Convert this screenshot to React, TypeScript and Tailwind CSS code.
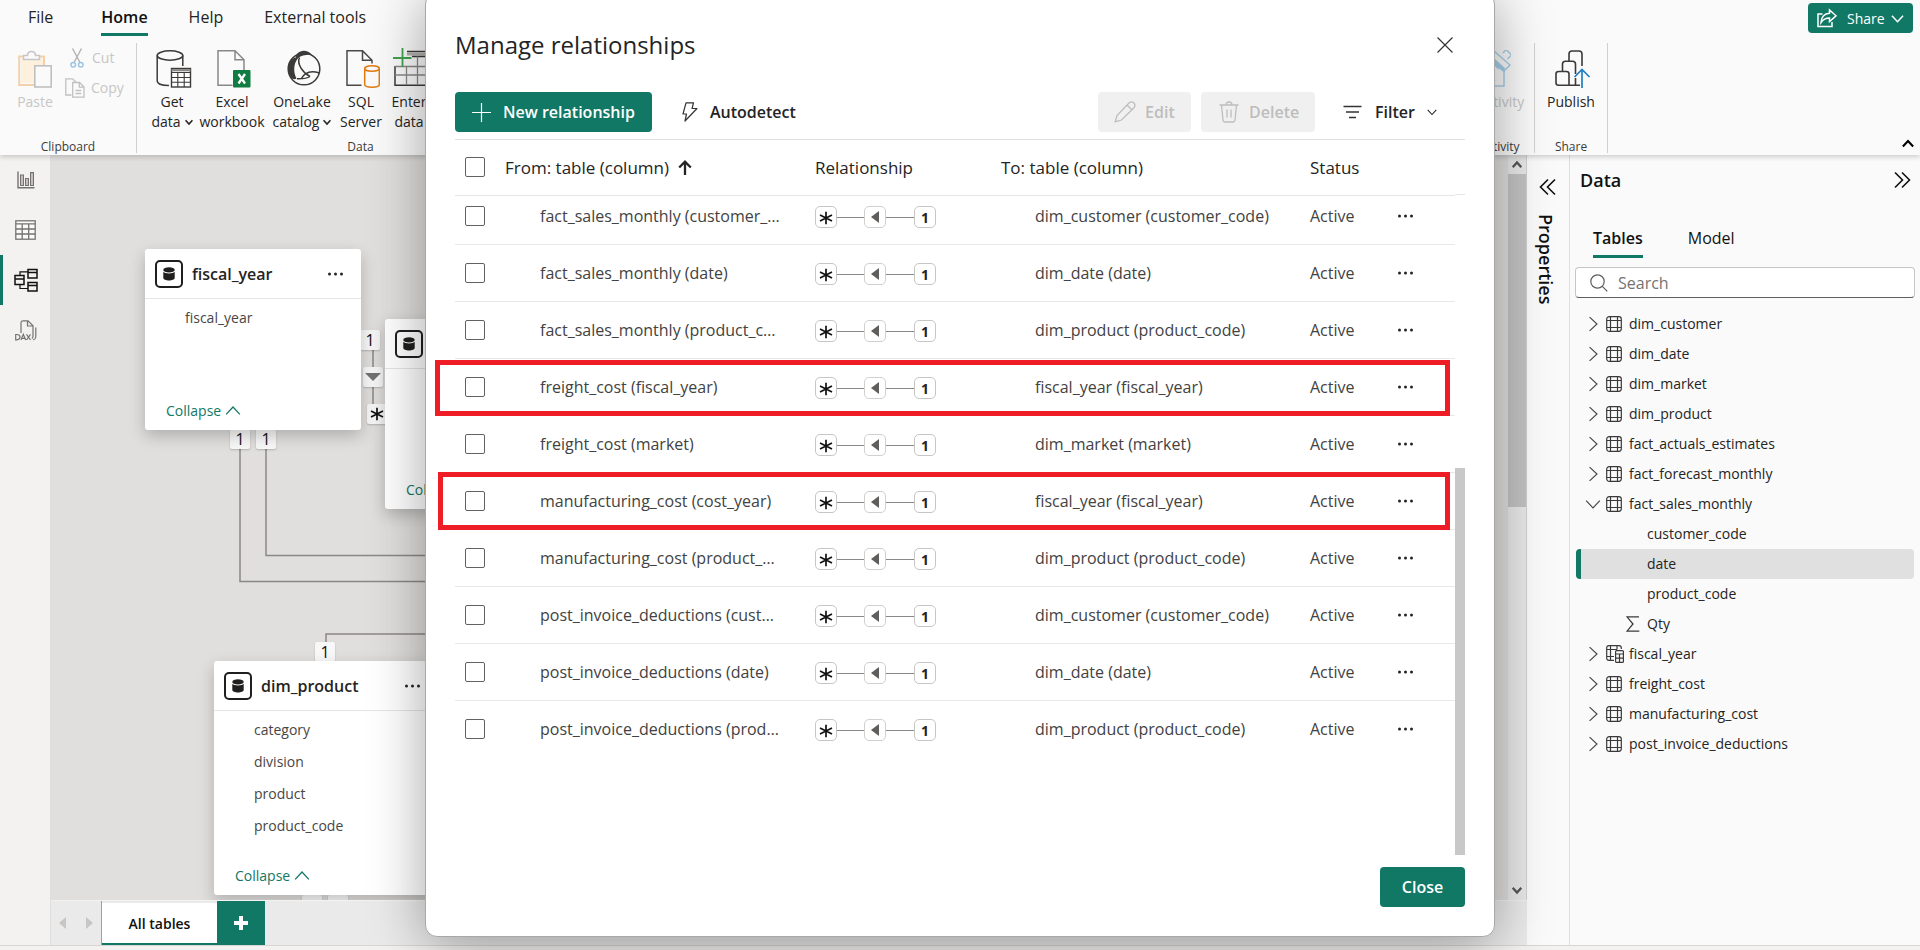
import React from "react";

type IconProps = { className?: string };

/* ---------- icons ---------- */

const Chevron = ({ dir = "right", size = 14, stroke = 1, className = "" }: { dir?: "right" | "down" | "up"; size?: number; stroke?: number; className?: string }) => {
  const d = { right: "M4 1 L10.5 7 L4 13", down: "M1 4 L7 10.5 L13 4", up: "M1 10 L7 3.5 L13 10" }[dir];
  return (
    <svg width={size} height={size} viewBox="0 0 14 14" fill="none" stroke="currentColor" strokeWidth={stroke} className={className} aria-hidden="true">
      <path d={d} />
    </svg>
  );
};

const DoubleChevron = ({ flip = false }: { flip?: boolean }) => (
  <svg width="18" height="18" viewBox="0 0 18 18" fill="none" stroke="currentColor" strokeWidth="1.6" aria-hidden="true">
    <path d={flip ? "M9 1.5 L1.5 9 L9 16.5 M16 1.5 L8.5 9 L16 16.5" : "M2 1.5 L9.5 9 L2 16.5 M9 1.5 L16.5 9 L9 16.5"} />
  </svg>
);

const Dots = () => (
  <svg width="18" height="6" viewBox="0 0 18 6" fill="currentColor" aria-hidden="true">
    <circle cx="2.5" cy="3" r="1.5" />
    <circle cx="8.5" cy="3" r="1.5" />
    <circle cx="14.5" cy="3" r="1.5" />
  </svg>
);

const PasteIcon = () => (
  <svg width="34" height="38" viewBox="0 0 34 38" fill="none" aria-hidden="true">
    <path d="M3 8 H25 V15 H16 V33 H3 Z" fill="#fdf0dc" />
    <path d="M26 15 V6.500 H1.200 V35 H16" stroke="#f4cfab" strokeWidth="2" />
    <path d="M5.500 9.500 V5.500 H9.500 C9.500 0 17.500 0 17.500 5.500 H21.500 V9.500 Z" fill="#fafafa" stroke="#c6c6c6" strokeWidth="1.500" />
    <rect x="16.800" y="15.800" width="16.400" height="21.200" fill="#fafafa" stroke="#c0c0c0" strokeWidth="1.600" />
  </svg>
);

const CutIcon = () => (
  <svg width="14" height="20" viewBox="0 0 14 20" fill="none" aria-hidden="true">
    <path d="M2.500 0.500 L10 14.500 M11.500 0.500 L4 14.500" stroke="#b5b5b5" strokeWidth="1.500" />
    <circle cx="3.200" cy="16.800" r="2.300" stroke="#9cc6e4" strokeWidth="1.500" />
    <circle cx="10.800" cy="16.800" r="2.300" stroke="#9cc6e4" strokeWidth="1.500" />
  </svg>
);

const CopyIcon = () => (
  <svg width="20" height="20" viewBox="0 0 20 20" fill="none" stroke="#c0c0c0" strokeWidth="1.300" aria-hidden="true">
    <path d="M6.500 17 H0.800 V0.800 H7.500 L11 4" />
    <path d="M7.700 4.500 H14.500 L19 9 V19.200 H7.700 Z M14.300 4.500 V9.200 H19 M10.500 12.500 H16.200 M10.500 15.500 H16.200" />
  </svg>
);

const DatabaseTableIcon = () => (
  <svg width="36" height="38" viewBox="0 0 36 38" fill="none" stroke="#3b3a39" strokeWidth="1.500" aria-hidden="true">
    <ellipse cx="14" cy="5.500" rx="12.800" ry="4.700" />
    <path d="M1.200 5.500 V31 C1.200 34 7 35.500 13 35.500 M26.800 5.500 V16" />
    <rect x="15.500" y="18.500" width="19" height="18.500" fill="#fff" strokeWidth="1.400" />
    <path d="M15.500 20.200 H34.500" strokeWidth="2.200" stroke="#8a8886" />
    <path d="M15.500 22.500 H34.500 M15.500 27.500 H34.500 M15.500 32.200 H34.500 M21.800 22.500 V37 M28.200 22.500 V37" strokeWidth="1.100" />
  </svg>
);

const ExcelIcon = () => (
  <svg width="34" height="38" viewBox="0 0 34 38" fill="none" aria-hidden="true">
    <path d="M15.500 35.300 H1 V0.800 H18 L27 9.800 V20 M18 0.800 V9.800 H27" stroke="#8a8886" strokeWidth="1.500" />
    <rect x="16" y="20" width="17.500" height="17.500" rx="1" fill="#107c41" />
    <path d="M21.500 24 L28 33.500 M28 24 L21.500 33.500" stroke="#fff" strokeWidth="2.300" />
  </svg>
);

const OneLakeIcon = () => (
  <svg width="36" height="38" viewBox="0 0 36 38" fill="none" aria-hidden="true">
    <circle cx="18" cy="19" r="15.800" stroke="#3b3a39" strokeWidth="1.500" />
    <path d="M10.500 4.500 C14.500 -0.500 21.500 -0.500 26 4.800 C20 4.500 15.500 5.200 12 8.200 C7.500 13.500 7 22 10.500 28.500 C8.500 29.800 6.500 29 5 27.500 C-0.500 20 1.500 9.500 9.800 7.500 Z" fill="#3b3a39" />
    <path d="M13.500 7.500 C10.500 14 17 23 24 26.500 M15 29 C19 21.500 26 20.500 33.500 23 M24 26.500 C21 28.500 16.500 29 11 28.800" stroke="#3b3a39" strokeWidth="1.500" />
  </svg>
);

const SqlIcon = () => (
  <svg width="34" height="38" viewBox="0 0 34 38" fill="none" aria-hidden="true">
    <path d="M15.500 35.300 H1 V0.800 H16.500 L26 10.300 V13.500 M16.500 0.800 V10.300 H26" stroke="#4a4948" strokeWidth="1.500" />
    <ellipse cx="26" cy="18.500" rx="7.300" ry="2.800" stroke="#e27a10" strokeWidth="1.500" />
    <path d="M18.700 18.500 V34.500 C18.700 38 33.300 38 33.300 34.500 V18.500" stroke="#e27a10" strokeWidth="1.500" />
  </svg>
);

const EnterDataIcon = () => (
  <svg width="36" height="38" viewBox="0 0 36 38" fill="none" className="overflow-visible" aria-hidden="true">
    <path d="M14 1.500 H36" stroke="#3b3a39" strokeWidth="1.500" />
    <path d="M14 4 H36" stroke="#b3b0ad" strokeWidth="3" />
    <path d="M19 6.500 H36 M2 16 V35.200 H36" stroke="#3b3a39" strokeWidth="1.500" />
    <path d="M2 16.500 H36 M2 25 H36 M13.500 16 V35 M24.500 6.500 V35" stroke="#8a8886" strokeWidth="1.300" />
    <path d="M9.500 -2 V17 M0 8 H18.500" stroke="#3fa34d" strokeWidth="1.800" />
  </svg>
);

const SensitivityIcon = () => (
  <svg width="34" height="38" viewBox="0 0 34 38" fill="none" stroke="#a5cfe8" strokeWidth="1.500" aria-hidden="true">
    <path d="M8 14 H2 V36 H27 V20 M8 21 L18 31" />
    <path d="M10 8 L22 19 M17 1 L33 15 L27 21 L12 8 Z M26 3 L29 -0.500 L34.500 5 L30.500 9" />
    <path d="M15 9 L27 20" strokeWidth="4" />
  </svg>
);

const PublishIcon = () => (
  <svg width="36" height="38" viewBox="0 0 36 38" fill="none" aria-hidden="true">
    <path d="M14 11 V4 Q14 1 17 1 H24 Q27 1 27 4 V16 M7.500 21 V14 Q7.500 11.200 10.500 11.200 H17.500 Q20.500 11.200 20.500 14 V24 M1 24 Q1 21.500 3.500 21.500 H11.500 Q14 21.500 14 24 V35.200 H3.500 Q1 35.200 1 33 Z M14 35.200 H25 M20.500 28 V35.200" stroke="#3b3a39" strokeWidth="1.600" />
    <path d="M27 38 V19.500 M19.500 27 L27 19.500 L34.500 27" stroke="#1f7fc4" strokeWidth="1.700" />
  </svg>
);

const ShareIcon = () => (
  <svg width="20" height="20" viewBox="0 0 20 20" fill="none" stroke="#fff" strokeWidth="1.500" aria-hidden="true">
    <path d="M5.500 6 H1 V18.500 H15 V14" />
    <path d="M4 14.500 C4.500 8.500 8 5.500 12.500 5.300 V2 L19 7.800 L12.500 13.500 V10 C9 10 6.500 11 4 14.500 Z" />
  </svg>
);

const ReportIcon = () => (
  <svg width="18" height="18" viewBox="0 0 18 18" fill="none" stroke="#757371" strokeWidth="1.200" aria-hidden="true">
    <path d="M1 0.500 V16.800 H17.500" strokeWidth="1.400" />
    <path d="M3.600 4 H6.400 V14.500 H3.600 Z M8.600 7.500 H11.400 V14.500 H8.600 Z M13.600 1.600 H16.400 V14.500 H13.600 Z" fill="#d6d4d2" />
  </svg>
);

const TableViewIcon = () => (
  <svg width="21" height="20" viewBox="0 0 21 20" fill="none" stroke="#757371" strokeWidth="1.300" aria-hidden="true">
    <rect x="0.800" y="0.800" width="19.400" height="18.400" fill="#fafafa" />
    <path d="M0.800 3.800 H20.200 M0.800 9 H20.200 M0.800 14 H20.200 M7.200 3.800 V19 M13.700 3.800 V19" />
  </svg>
);

const ModelIcon = () => (
  <svg width="24" height="24" viewBox="0 0 24 24" fill="none" stroke="#111" strokeWidth="1.500" aria-hidden="true">
    <path d="M1 7.500 H10 V16.500 H1 Z M1 11 H10 M14 1.500 H23 V10 H14 Z M14 4.500 H23 M14 14.500 H23 V23 H14 Z M14 17.500 H23" />
    <path d="M6 7.500 V3.800 H14 M6 16.500 V20.500 H14" strokeWidth="1.200" />
  </svg>
);

const DaxIcon = () => (
  <svg width="22" height="21" viewBox="0 0 22 21" fill="none" stroke="#757371" strokeWidth="1.200" aria-hidden="true">
    <path d="M6 13 V3 Q6 0.800 8 0.800 H13 L18 5.800 V16 Q18 18 16.800 18.500 M12.500 0.800 V6 H18 M20.800 7.500 V17 Q20.500 19.500 18 20" />
    <path d="M0.700 14.500 V19.800 H2 Q5 19.500 5 17 Q5 14.600 2 14.500 Z M6 20 L8.300 14.300 L10.700 20 M7 18.300 H9.800 M11.500 14.300 L15.500 20 M15.500 14.300 L11.500 20" />
  </svg>
);

const GridIcon = () => (
  <svg width="16" height="16" viewBox="0 0 16 16" fill="none" stroke="#3b3a39" strokeWidth="1.200" aria-hidden="true">
    <rect x="0.700" y="0.700" width="14.600" height="14.600" rx="2.500" />
    <path d="M4.500 0.700 V15.300 M11.500 0.700 V15.300 M0.700 4.500 H15.300 M0.700 11.500 H15.300" />
  </svg>
);

const CalcGridIcon = () => (
  <svg width="18" height="18" viewBox="0 0 18 18" fill="none" stroke="#3b3a39" strokeWidth="1.200" aria-hidden="true">
    <path d="M8 15.300 H3 Q0.700 15.300 0.700 13 V3 Q0.700 0.700 3 0.700 H13 Q15.300 0.700 15.300 3 V4 M4.500 0.700 V15.300 M11 0.700 V4.500 M0.700 4.500 H11 M0.700 11.500 H8" />
    <rect x="9.600" y="5.600" width="7.800" height="11.800" rx="1" fill="#fafafa" />
    <path d="M9.600 9 H17.400 M9.600 13.200 H17.400 M13.500 9 V17.400" />
  </svg>
);

const SigmaIcon = () => (
  <svg width="14" height="16" viewBox="0 0 14 16" fill="none" stroke="#3b3a39" strokeWidth="1.300" aria-hidden="true">
    <path d="M13 0.800 H1 L7 8 L1 15.200 H13.300" />
  </svg>
);

const CardIcon = () => (
  <span className="flex size-7 shrink-0 items-center justify-center rounded-[5px] border-2 border-[#201f1e]">
    <svg width="12" height="14" viewBox="0 0 12 14" fill="#201f1e" aria-hidden="true">
      <ellipse cx="6" cy="2.900" rx="5.700" ry="2.600" />
      <path d="M0.300 4.800 C2 7 10 7 11.700 4.800 V11 C11.700 14.300 0.300 14.300 0.300 11 Z" />
    </svg>
  </span>
);

const Asterisk = ({ className = "" }: IconProps) => (
  <svg width="14" height="14" viewBox="0 0 14 14" stroke="#111" strokeWidth="1.700" className={className} aria-hidden="true">
    <path d="M7 0.800 V13.200 M1 4 L13 10 M13 4 L1 10" />
  </svg>
);

/* ---------- ribbon ---------- */

const RibbonButton = ({ icon, lines, width, caret, disabled }: { icon: React.ReactNode; lines: string[]; width: string; caret?: boolean; disabled?: boolean }) => (
  <button type="button" className={`flex shrink-0 flex-col items-center whitespace-nowrap pt-[7px] text-[14px] leading-5 ${disabled ? "text-[#c8c6c4]" : "text-[#252423]"} ${width}`}>
    <span className="mb-1 pl-1">{icon}</span>
    {lines.map((l, i) => (
      <span key={l} className="flex items-center gap-1">
        {l}
        {caret && i === lines.length - 1 && <Chevron dir="down" size={8} stroke={2.800} />}
      </span>
    ))}
  </button>
);

const RibbonGroup = ({ label, className, children }: { label: string; className: string; children: React.ReactNode }) => (
  <section className={`flex shrink-0 flex-col justify-between border-r border-[#d2d0ce] ${className}`}>
    <div className="flex">{children}</div>
    <div className="text-center text-[12px] leading-3 text-[#3b3a39]">{label}</div>
  </section>
);

const Ribbon = () => (
  <header className="relative z-10 h-[155px] shrink-0 bg-[#fafafa] shadow-[0_2px_5px_rgba(0,0,0,0.18)]">
    <div className="flex h-[43px] items-start justify-between pr-[7px]">
      <nav className="flex gap-[41px] pl-7 text-[16px] leading-[26px] text-[#252423]">
        <a href="#file" className="mr-[7px] pt-1">File</a>
        <a href="#home" className="border-b-[3px] border-[#117865] pt-1 pb-[3px] font-semibold text-[#111]">Home</a>
        <a href="#help" className="pt-1">Help</a>
        <a href="#external" className="pt-1">External tools</a>
      </nav>
      <button type="button" className="mt-[3px] flex h-[30px] w-[105px] items-center rounded-[4px] bg-[#117865] pl-[9px] text-[14px] text-white">
        <ShareIcon />
        <span className="mr-[6px] ml-[10px]">Share</span>
        <Chevron dir="down" size={13} stroke={1.600} />
      </button>
    </div>
    <div className="flex h-[110px]">
      <RibbonGroup label="Clipboard" className="w-[137px]">
        <button type="button" className="flex w-[70px] shrink-0 flex-col items-center gap-1 pt-[7px] text-[14px] leading-5 text-[#c8c6c4]">
          <PasteIcon />
          Paste
        </button>
        <div className="flex flex-col gap-[10px] pt-[5px] text-[14px] leading-5 text-[#c8c6c4]">
          <button type="button" className="flex items-center gap-2"><CutIcon />Cut</button>
          <button type="button" className="-ml-[5px] flex items-center gap-[6px]"><CopyIcon />Copy</button>
        </div>
      </RibbonGroup>
      <RibbonGroup label="Data" className="w-[441px] pl-[7px]">
        <RibbonButton icon={<DatabaseTableIcon />} lines={["Get", "data"]} caret width="w-14" />
        <RibbonButton icon={<ExcelIcon />} lines={["Excel", "workbook"]} width="w-16" />
        <RibbonButton icon={<OneLakeIcon />} lines={["OneLake", "catalog"]} caret width="w-[76px]" />
        <RibbonButton icon={<SqlIcon />} lines={["SQL", "Server"]} width="w-[42px]" />
        <RibbonButton icon={<EnterDataIcon />} lines={["Enter", "data"]} width="w-[54px]" />
      </RibbonGroup>
      <div className="flex-1" />
      <RibbonGroup label="Sensitivity" className="w-[86px] items-center">
        <RibbonButton icon={<SensitivityIcon />} lines={["Sensitivity"]} width="w-[70px]" disabled />
      </RibbonGroup>
      <RibbonGroup label="Share" className="w-[73px] items-center">
        <RibbonButton icon={<PublishIcon />} lines={["Publish"]} width="w-16" />
      </RibbonGroup>
      <div className="flex w-[312px] shrink-0 items-end justify-end pr-[6px] pb-[3px]">
        <button type="button" aria-label="Collapse ribbon"><Chevron dir="up" size={12} stroke={2.500} /></button>
      </div>
    </div>
  </header>
);

/* ---------- left rail ---------- */

const Rail = () => {
  const items = [
    { label: "Report view", icon: <ReportIcon /> },
    { label: "Table view", icon: <TableViewIcon /> },
    { label: "Model view", icon: <ModelIcon />, active: true },
    { label: "DAX query view", icon: <DaxIcon /> },
  ];
  return (
    <nav className="flex w-[51px] shrink-0 flex-col border-r border-[#e1dfdd] bg-[#f3f2f1]">
      {items.map((i) => (
        <button key={i.label} type="button" aria-label={i.label} className={`flex h-[50px] items-center justify-center border-l-[3px] pr-[2px] ${i.active ? "border-[#117865]" : "border-transparent"}`}>
          {i.icon}
        </button>
      ))}
    </nav>
  );
};

/* ---------- model diagram ---------- */

const ModelCard = ({ name, fields, place }: { name: string; fields: string[]; place: string }) => (
  <article className={`absolute flex flex-col rounded-[3px] bg-white shadow-[0_6px_16px_rgba(0,0,0,0.22)] ${place}`}>
    <header className="flex h-[50px] shrink-0 items-center gap-[9px] border-b border-[#e5e5e5] pr-4 pl-[10px] text-[#252423]">
      <CardIcon />
      <h3 className="flex-1 text-[16px] font-semibold">{name}</h3>
      <button type="button" aria-label={`${name} options`}><Dots /></button>
    </header>
    <ul className="flex-1 overflow-hidden pt-[3px] pl-10 text-[14px] leading-8 text-[#484644]">
      {fields.map((f) => <li key={f}>{f}</li>)}
    </ul>
    <button type="button" className="flex items-center gap-1 pb-[9px] pl-[21px] text-[14px] leading-5 text-[#117865]">
      Collapse <Chevron dir="up" size={16} stroke={1.100} />
    </button>
  </article>
);

const Badge = ({ place, children }: { place: string; children: React.ReactNode }) => (
  <span className={`absolute flex size-5 items-center justify-center rounded-[2px] bg-[#f8f8f8] text-[16px] text-[#111] shadow-[0_1px_2px_rgba(0,0,0,0.2)] ${place}`}>{children}</span>
);

const Diagram = () => (
  <div className="relative min-w-0 flex-1 overflow-hidden bg-[#e0dfdd]">
    <svg className="absolute inset-0 size-full" fill="none" stroke="#8a8886" strokeWidth="1.500" aria-hidden="true">
      <path d="M189 280 V426.500 H500 M215 280 V400.500 H500 M275 500 V479 H500 M322 190 V255" />
    </svg>
    <Badge place="left-[179px] top-[274px]">1</Badge>
    <Badge place="left-[205px] top-[274px]">1</Badge>
    <Badge place="left-[309px] top-[175px]">1</Badge>
    <Badge place="left-[312px] top-[212px]">
      <svg width="16" height="8" viewBox="0 0 16 8" fill="#757371" aria-hidden="true"><path d="M0 0 H16 L8 8 Z" /></svg>
    </Badge>
    <Badge place="left-[316px] top-[249px]"><Asterisk /></Badge>
    <Badge place="left-[264px] top-[487px]">1</Badge>
    <Badge place="left-[251px] top-[740px]">{null}</Badge>
    <Badge place="left-[277px] top-[740px]">{null}</Badge>
    <ModelCard name="fiscal_year" fields={["fiscal_year"]} place="left-[94px] top-[94px] h-[181px] w-[216px]" />
    <ModelCard name="dim_date" fields={[]} place="left-[334px] top-[164px] h-[190px] w-[216px]" />
    <ModelCard name="dim_product" fields={["category", "division", "product", "product_code"]} place="left-[163px] top-[506px] h-[234px] w-[224px]" />
  </div>
);

const CanvasScrollbar = () => (
  <div className="flex w-[19px] shrink-0 flex-col items-center border-r border-[#d2d0ce] bg-[#e8e8e8] text-[#555]">
    <span className="flex h-[19px] items-center"><Chevron dir="up" size={10} stroke={3.200} /></span>
    <span className="h-[333px] w-full bg-[#c2c2c2]" />
    <span className="flex-1" />
    <span className="flex h-5 items-center"><Chevron dir="down" size={10} stroke={3.200} /></span>
  </div>
);

const PageTabs = () => (
  <div className="flex h-[45px] shrink-0 border-t border-[#f3f2f1] bg-[#eaeaea]">
    <div className="flex w-[51px] items-center justify-between border-r border-[#a19f9d] pr-2 pl-2">
      <svg width="7" height="12" viewBox="0 0 7 12" fill="#c8c6c4" aria-hidden="true"><path d="M7 0 V12 L0 6 Z" /></svg>
      <svg width="7" height="12" viewBox="0 0 7 12" fill="#c8c6c4" aria-hidden="true"><path d="M0 0 V12 L7 6 Z" /></svg>
    </div>
    <button type="button" className="mt-[2px] w-[115px] border-b-2 border-[#117865] bg-white pt-px text-[14px] font-semibold text-[#111]">All tables</button>
    <button type="button" aria-label="New page" className="flex w-12 items-center justify-center bg-[#117865]">
      <svg width="14" height="14" viewBox="0 0 14 14" stroke="#fff" strokeWidth="4" aria-hidden="true"><path d="M7 0 V14 M0 7 H14" /></svg>
    </button>
  </div>
);

/* ---------- right panels ---------- */

const PropertiesStrip = () => (
  <aside className="flex w-[43px] shrink-0 flex-col items-center border-r border-[#e1dfdd] bg-[#fafafa] pt-[23px] text-[#111]">
    <button type="button" aria-label="Expand properties"><DoubleChevron flip /></button>
    <h2 className="mt-[18px] mr-1 text-[18px] leading-6 font-semibold [writing-mode:vertical-rl]">Properties</h2>
  </aside>
);

type Node = { name: string; open?: boolean; calc?: boolean; children?: { name: string; sum?: boolean; selected?: boolean }[] };

const tree: Node[] = [
  { name: "dim_customer" },
  { name: "dim_date" },
  { name: "dim_market" },
  { name: "dim_product" },
  { name: "fact_actuals_estimates" },
  { name: "fact_forecast_monthly" },
  { name: "fact_sales_monthly", open: true, children: [{ name: "customer_code" }, { name: "date", selected: true }, { name: "product_code" }, { name: "Qty", sum: true }] },
  { name: "fiscal_year", calc: true },
  { name: "freight_cost" },
  { name: "manufacturing_cost" },
  { name: "post_invoice_deductions" },
];

const DataPanel = () => (
  <aside className="w-[350px] shrink-0 bg-[#fafafa] text-[#252423]">
    <div className="flex h-[50px] items-center justify-between pr-[9px] pl-[10px] text-[#111]">
      <h2 className="text-[18px] font-semibold">Data</h2>
      <button type="button" aria-label="Collapse data pane"><DoubleChevron /></button>
    </div>
    <div className="flex gap-[45px] pt-5 pl-[23px] text-[16px] leading-[26px] text-[#111]">
      <button type="button" className="border-b-[3px] border-[#117865] pb-1 font-semibold">Tables</button>
      <button type="button" className="pb-[7px]">Model</button>
    </div>
    <label className="mx-[5px] mt-[9px] flex h-[31px] items-center gap-[10px] rounded-[4px] border border-[#c8c6c4] border-b-[#605e5c] bg-white pl-[14px]">
      <svg width="18" height="18" viewBox="0 0 18 18" fill="none" stroke="#605e5c" strokeWidth="1.200" aria-hidden="true">
        <circle cx="7.500" cy="7.500" r="6.700" />
        <path d="M12.300 12.300 L17.300 17.300" />
      </svg>
      <input type="text" aria-label="Search" placeholder="Search" className="min-w-0 flex-1 bg-transparent pt-px text-[16px] outline-none placeholder:text-[#757371]" />
    </label>
    <ul className="mx-[6px] mt-[11px] text-[14px] leading-[30px]">
      {tree.map((n) => (
        <li key={n.name}>
          <div className="flex h-[30px] items-center pl-[9px]">
            <Chevron dir={n.open ? "down" : "right"} size={16} className="mr-[5px] text-[#484644]" />
            <span className="w-[23px]">{n.calc ? <CalcGridIcon /> : <GridIcon />}</span>
            {n.name}
          </div>
          {n.children && (
            <ul>
              {n.children.map((c) => (
                <li key={c.name} className={`flex h-[30px] items-center rounded-[4px] border-l-[5px] pl-[45px] ${c.selected ? "border-[#117865] bg-[#e0e0e0]" : "border-transparent"}`}>
                  <span className="w-[21px]">{c.sum && <SigmaIcon />}</span>
                  {c.name}
                </li>
              ))}
            </ul>
          )}
        </li>
      ))}
    </ul>
  </aside>
);

/* ---------- dialog ---------- */

const rows = [
  { from: "fact_sales_monthly (customer_code)", to: "dim_customer (customer_code)" },
  { from: "fact_sales_monthly (date)", to: "dim_date (date)" },
  { from: "fact_sales_monthly (product_code)", to: "dim_product (product_code)" },
  { from: "freight_cost (fiscal_year)", to: "fiscal_year (fiscal_year)", mark: "-left-5 top-[2px]" },
  { from: "freight_cost (market)", to: "dim_market (market)" },
  { from: "manufacturing_cost (cost_year)", to: "fiscal_year (fiscal_year)", mark: "-left-[17px] top-0" },
  { from: "manufacturing_cost (product_code)", to: "dim_product (product_code)" },
  { from: "post_invoice_deductions (customer_code)", to: "dim_customer (customer_code)" },
  { from: "post_invoice_deductions (date)", to: "dim_date (date)" },
  { from: "post_invoice_deductions (product_code)", to: "dim_product (product_code)" },
];

const Checkbox = ({ label }: { label: string }) => (
  <input type="checkbox" aria-label={label} className="ml-[10px] block size-5 appearance-none rounded-[2px] border border-[#616161] bg-white" />
);

const Link = () => (
  <span className="flex items-center pt-[3px]">
    <span className="flex size-[22px] items-center justify-center rounded-[5px] border border-[#c8c6c4] pt-[2px]"><Asterisk /></span>
    <span className="h-px w-[27px] bg-[#8a8886]" />
    <span className="flex size-[22px] items-center justify-center rounded-[5px] border border-[#d2d0ce]">
      <svg width="8" height="12" viewBox="0 0 8 12" fill="#605e5c" aria-hidden="true"><path d="M8 0 V12 L0 6 Z" /></svg>
    </span>
    <span className="h-px w-7 bg-[#8a8886]" />
    <span className="flex size-[22px] items-center justify-center rounded-[5px] border border-[#c8c6c4] text-[14px] font-bold text-[#252423]">1</span>
  </span>
);

const Dialog = () => (
  <div className="absolute inset-0 z-20 flex justify-center overflow-hidden pb-[13px]">
    <div role="dialog" aria-labelledby="dlg-title" className="-mt-2 flex w-[1070px] flex-col rounded-xl border border-[#a8a8a8] bg-white px-[29px] pb-[29px] shadow-[0_8px_56px_rgba(0,0,0,0.36)]">
      <div className="mt-[34px] flex h-9 items-center justify-between pr-3">
        <h1 id="dlg-title" className="text-[24px] font-medium text-[#242424]">Manage relationships</h1>
        <button type="button" aria-label="Close dialog">
          <svg width="16" height="16" viewBox="0 0 16 16" stroke="#333" strokeWidth="1.200" aria-hidden="true"><path d="M0.500 0.500 L15.500 15.500 M15.500 0.500 L0.500 15.500" /></svg>
        </button>
      </div>
      <div className="mt-[29px] flex h-10 shrink-0 items-center text-[16px] font-semibold text-[#242424]">
        <button type="button" className="flex h-10 w-[197px] items-center gap-3 rounded-[4px] bg-[#117865] pl-[17px] text-white">
          <svg width="19" height="19" viewBox="0 0 19 19" stroke="#fff" strokeWidth="1.200" aria-hidden="true"><path d="M9.500 0 V19 M0 9.500 H19" /></svg>
          New relationship
        </button>
        <button type="button" className="ml-[30px] flex items-center gap-3">
          <svg width="16" height="20" viewBox="0 0 16 20" fill="none" stroke="#333" strokeWidth="1.200" strokeLinejoin="round" aria-hidden="true">
            <path d="M4 0.800 H11.500 L10 6.500 H15 L3 19 L4.500 12 H1 Z" />
          </svg>
          Autodetect
        </button>
        <span className="flex-1" />
        <button type="button" disabled className="flex h-10 w-[93px] items-center gap-[9px] rounded-[4px] bg-[#f0f0f0] pl-4 text-[#bdbdbd]">
          <svg width="22" height="22" viewBox="0 0 22 22" fill="none" stroke="currentColor" strokeWidth="1.300" aria-hidden="true">
            <path d="M15 2 Q17.500 -0.300 20 2 Q22 4.500 19.800 7 L7.500 19 L1.200 20.800 L3 14.500 Z M13 4 L18 9" />
          </svg>
          Edit
        </button>
        <button type="button" disabled className="ml-[10px] flex h-10 w-[114px] items-center gap-[10px] rounded-[4px] bg-[#f0f0f0] pl-[18px] text-[#bdbdbd]">
          <svg width="20" height="22" viewBox="0 0 20 22" fill="none" stroke="currentColor" strokeWidth="1.300" aria-hidden="true">
            <path d="M0.500 4 H19.500 M7 4 Q7 1 10 1 Q13 1 13 4 M2.500 4 L4 19 Q4.200 21 6 21 H14 Q15.800 21 16 19 L17.500 4 M8 8.500 V16.500 M12 8.500 V16.500" />
          </svg>
          Delete
        </button>
        <button type="button" className="mr-7 ml-7 flex items-center">
          <svg width="19" height="14" viewBox="0 0 19 14" stroke="#333" strokeWidth="1.500" aria-hidden="true"><path d="M0.500 1.500 H18.500 M3 7 H16 M6 12.500 H13" /></svg>
          <span className="mr-3 ml-[13px]">Filter</span>
          <Chevron dir="down" size={10} stroke={1.500} />
        </button>
      </div>
      <div className="mt-[7px] flex min-h-0 flex-1 border-t border-[#e0e0e0]">
        <div className="min-w-0 flex-1">
          <table className="w-full table-fixed border-collapse text-left text-[16px] text-[#424242]">
            <colgroup>
              <col className="w-[50px]" />
              <col className="w-[310px]" />
              <col className="w-[186px]" />
              <col className="w-[309px]" />
              <col className="w-[87px]" />
              <col className="w-[58px]" />
            </colgroup>
            <thead>
              <tr className="h-[55px] border-b border-[#e5e5e5] text-[17px] text-[#242424] [&>th]:font-medium">
                <th><Checkbox label="Select all" /></th>
                <th>
                  <span className="flex items-center gap-[9px]">
                    From: table (column)
                    <svg width="14" height="15" viewBox="0 0 14 15" fill="none" stroke="#242424" strokeWidth="2.300" aria-hidden="true"><path d="M7 15 V2 M1.200 7.500 L7 1.700 L12.800 7.500" /></svg>
                  </span>
                </th>
                <th>Relationship</th>
                <th>To: table (column)</th>
                <th>Status</th>
                <th aria-label="Options" />
              </tr>
            </thead>
            <tbody>
              {rows.map((r, i) => (
                <tr key={r.from} className={`relative ${i === 0 ? "h-[49px] [&>td]:pb-2" : "h-[57px]"} ${i === rows.length - 1 ? "" : "border-b border-[#e8e8e8]"}`}>
                  <td>
                    <Checkbox label={r.from} />
                    {r.mark && <span className={`pointer-events-none absolute right-[5px] -bottom-[2px] border-[5px] border-[#ee1c25] ${r.mark}`} />}
                  </td>
                  <td className="truncate pr-[34px] pl-[35px]">{r.from}</td>
                  <td><Link /></td>
                  <td className="pl-[34px] whitespace-nowrap">{r.to}</td>
                  <td>Active</td>
                  <td><button type="button" aria-label={`Options for ${r.from}`} className="block text-[#242424]"><Dots /></button></td>
                </tr>
              ))}
            </tbody>
          </table>
        </div>
        <div className="flex w-[10px] shrink-0 flex-col">
          <div className="h-[55px] border-b border-[#e5e5e5]" />
          <div className="h-[273px]" />
          <div className="flex-1 bg-[#c8c8c8]" />
        </div>
      </div>
      <div className="mt-3 flex justify-end">
        <button type="button" className="h-10 w-[85px] rounded-[4px] bg-[#117865] text-[16px] font-semibold text-white">Close</button>
      </div>
    </div>
  </div>
);

export default function App() {
  return (
    <div className="relative flex h-screen flex-col overflow-hidden bg-[#f3f2f1] font-['Open_Sans','Noto_Sans',sans-serif]">
      <Ribbon />
      <main className="flex min-h-0 flex-1 border-b border-[#d8d6d4]">
        <Rail />
        <div className="flex min-w-0 flex-1 flex-col">
          <div className="flex min-h-0 flex-1">
            <Diagram />
            <CanvasScrollbar />
          </div>
          <PageTabs />
        </div>
        <PropertiesStrip />
        <DataPanel />
      </main>
      <div className="h-1 shrink-0 bg-[#f3f2f1]" />
      <Dialog />
    </div>
  );
}
